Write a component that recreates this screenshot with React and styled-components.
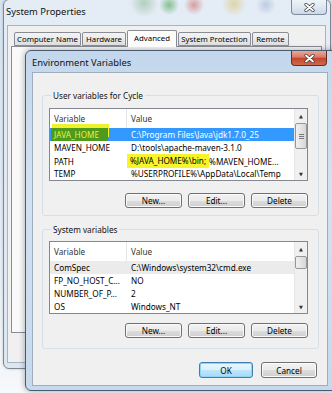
import React from 'react';
import styled, { createGlobalStyle } from 'styled-components';

const GlobalStyle = createGlobalStyle`
    html, body {
        margin: 0;
        padding: 0;
        width: 332px;
        height: 393px;
        overflow: hidden;
        background: #f4f7fa;
    }
    * {
        box-sizing: border-box;
    }
`;

const UI_FONT = `"Noto Sans", "DejaVu Sans", sans-serif`;

const Desktop = styled.div`
    position: relative;
    width: 332px;
    height: 393px;
    overflow: hidden;
    font-family: ${UI_FONT};
    font-size: 8.2px;
    color: #000;
    background: linear-gradient(180deg, #d6e4f1 0%, #e6eef6 70%, #f7f9fb 100%);
`;

const Window = styled.div`
    position: absolute;
    left: ${(p) => p.left}px;
    top: ${(p) => p.top}px;
    width: ${(p) => p.width}px;
    height: ${(p) => p.height}px;
    display: flex;
    flex-direction: column;
    border: 1px solid ${(p) => (p.active ? '#4a5a70' : '#7d8794')};
    border-radius: 6px;
    box-shadow: ${(p) => (p.active ? '0 0 6px rgba(0, 0, 0, 0.35)' : '0 0 3px rgba(0, 0, 0, 0.2)')};
    background: ${(p) =>
        p.active
            ? 'linear-gradient(180deg, #c3d7ec 0%, #d3e2f2 40%, #c6d9ed 100%)'
            : `radial-gradient(circle at 140px 3px, rgba(120, 170, 120, 0.45), transparent 14px),
               radial-gradient(circle at 165px 5px, rgba(70, 160, 80, 0.6), transparent 10px),
               radial-gradient(circle at 190px 5px, rgba(200, 80, 70, 0.5), transparent 10px),
               radial-gradient(circle at 230px 4px, rgba(220, 190, 90, 0.5), transparent 12px),
               radial-gradient(circle at 262px 5px, rgba(150, 170, 210, 0.5), transparent 10px),
               linear-gradient(180deg, #e4ecf5 0%, #dde7f2 100%)`};
`;

const TitleBar = styled.div`
    display: flex;
    align-items: flex-start;
    height: ${(p) => p.height}px;
    flex: none;
`;

const Title = styled.span`
    padding: ${(p) => p.pad};
    font-size: 9.4px;
    color: #111;
    white-space: nowrap;
`;

const CloseButton = styled.div`
    margin-left: auto;
    margin-right: ${(p) => p.right}px;
    width: 36px;
    height: 15px;
    display: flex;
    align-items: center;
    justify-content: center;
    border: 1px solid ${(p) => (p.red ? '#6b2a22' : '#7f8b9c')};
    border-top: none;
    border-radius: 0 0 4px 4px;
    background: ${(p) =>
        p.red
            ? 'linear-gradient(180deg, #e9a898 0%, #d67a66 45%, #c2442c 50%, #cf6a4c 100%)'
            : 'linear-gradient(180deg, #eef3f8 0%, #dfe8f1 50%, #cbd8e6 100%)'};
`;

const CloseGlyph = () => (
    <svg width="11" height="9" viewBox="0 0 11 9">
        <path d="M2 1.5 L9 7.5 M9 1.5 L2 7.5" stroke="#3a3a3a" strokeWidth="3.2" strokeLinecap="round" />
        <path d="M2 1.5 L9 7.5 M9 1.5 L2 7.5" stroke="#fff" strokeWidth="1.8" strokeLinecap="round" />
    </svg>
);

const OuterClient = styled.div`
    flex: 1;
    display: flex;
    flex-direction: column;
    margin: 0 4px 5px 3px;
    padding: 4px 3px 29px 3px;
    background: #f0f0f0;
    border: 1px solid #a9b4c2;
`;

const TabStrip = styled.div`
    display: flex;
    align-items: flex-end;
    height: 16px;
    padding-left: 3px;
    position: relative;
    z-index: 1;
`;

const Tab = styled.div`
    width: ${(p) => p.width}px;
    height: ${(p) => (p.selected ? 17 : 14)}px;
    margin-bottom: ${(p) => (p.selected ? -1 : 0)}px;
    margin-right: 1px;
    display: flex;
    align-items: center;
    justify-content: center;
    white-space: nowrap;
    font-size: 7.8px;
    border: 1px solid #898c95;
    border-bottom: ${(p) => (p.selected ? 'none' : '1px solid #898c95')};
    border-radius: 2px 2px 0 0;
    padding-bottom: ${(p) => (p.selected ? 2 : 0)}px;
    background: ${(p) => (p.selected ? '#fcfcfc' : 'linear-gradient(180deg, #f3f3f3 0%, #ebebeb 50%, #dddddd 100%)')};
`;

const TabPanel = styled.div`
    flex: 1;
    border: 1px solid #898c95;
    background: #f9f9f9;
`;

const DialogClient = styled.div`
    flex: 1;
    display: flex;
    flex-direction: column;
    margin: 0 8px 6px 6px;
    padding: 0 8px 7px 9px;
    background: #f0f0f0;
    border: 1px solid #a0adbd;
`;

const Group = styled.fieldset`
    margin: ${(p) => p.top}px 0 0 0;
    padding: ${(p) => p.padTop}px 10px ${(p) => p.padBottom}px 6px;
    border: 1px solid #d5dfe5;
    border-radius: 3px;
    min-width: 0;
`;

const Legend = styled.legend`
    margin-left: 2px;
    padding: 0 2px;
    line-height: 11px;
    color: #111;
`;

const ListBox = styled.div`
    display: flex;
    height: 73px;
    border: 1px solid #828790;
    background: #fff;
`;

const Table = styled.div`
    flex: 1;
    display: flex;
    flex-direction: column;
    min-width: 0;
`;

const Row = styled.div`
    display: grid;
    grid-template-columns: 77px 1fr;
    height: ${(p) => (p.header ? 19 : 13)}px;
    align-items: center;
    white-space: nowrap;
    background: ${(p) => (p.selected ? '#3399ff' : p.focus ? '#ebebeb' : 'transparent')};
    color: ${(p) => (p.header ? '#333' : '#000')};
`;

const Cell = styled.div`
    height: 100%;
    display: flex;
    align-items: center;
    padding-left: 4px;
    border-right: ${(p) => (p.divider ? '1px solid #e3e6ea' : 'none')};
    color: ${(p) => (p.light ? '#fff' : 'inherit')};
`;

const GreenMark = styled.span`
    margin-left: -3px;
    padding: 0 9px 0 3px;
    height: 13px;
    display: flex;
    align-items: center;
    background: #4d9a1c;
    color: #e6f04a;
    box-shadow: 1px -4px 0 #eef22c;
`;

const YellowMark = styled.span`
    margin-left: -4px;
    padding: 1px 3px 2px 3px;
    background: #f6f52c;
`;

const Scrollbar = styled.div`
    width: 13px;
    flex: none;
    display: flex;
    flex-direction: column;
    background: #f0f0f0;
    border-left: 1px solid #e6e6e6;
`;

const Arrow = styled.div`
    height: 13px;
    display: flex;
    align-items: center;
    justify-content: center;
    font-size: 5px;
    color: #333;
`;

const Thumb = styled.div`
    height: ${(p) => p.size}px;
    margin-top: 1px;
    border: 1px solid #979797;
    border-radius: 2px;
    background: linear-gradient(90deg, #f1f1f1 0%, #e4e4e4 50%, #d6d6d6 100%);
    display: flex;
    align-items: center;
    justify-content: center;
`;

const Grip = styled.div`
    width: 5px;
    height: 5px;
    background: repeating-linear-gradient(180deg, #777 0 1px, transparent 1px 2px);
`;

const Track = styled.div`
    flex: 1;
`;

const ButtonRow = styled.div`
    display: flex;
    justify-content: flex-end;
    gap: ${(p) => p.gap}px;
    margin-top: ${(p) => p.top}px;
    margin-right: ${(p) => p.right || 0}px;
`;

const Button = styled.button`
    width: ${(p) => p.width}px;
    height: ${(p) => p.height}px;
    padding: 0;
    font-family: ${UI_FONT};
    font-size: 8.2px;
    color: #000;
    border: 1px solid ${(p) => (p.primary ? '#3c7fb1' : '#707070')};
    border-radius: 3px;
    box-shadow: inset 0 0 0 1px ${(p) => (p.primary ? '#8fd3f5' : '#fbfbfb')};
    background: ${(p) =>
        p.primary
            ? 'linear-gradient(180deg, #eaf6fd 0%, #d9f0fc 50%, #bee6fd 50%, #a7d9f5 100%)'
            : 'linear-gradient(180deg, #f2f2f2 0%, #ebebeb 50%, #dddddd 50%, #cfcfcf 100%)'};
`;

const userVars = [
    { name: 'JAVA_HOME', value: 'C:\\Program Files\\Java\\jdk1.7.0_25', selected: true },
    { name: 'MAVEN_HOME', value: 'D:\\tools\\apache-maven-3.1.0' },
    { name: 'PATH', value: '%MAVEN_HOME...', marked: '%JAVA_HOME%\\bin;' },
    { name: 'TEMP', value: '%USERPROFILE%\\AppData\\Local\\Temp' },
];

const systemVars = [
    { name: 'ComSpec', value: 'C:\\Windows\\system32\\cmd.exe', focus: true },
    { name: 'FP_NO_HOST_C...', value: 'NO' },
    { name: 'NUMBER_OF_P...', value: '2' },
    { name: 'OS', value: 'Windows_NT' },
];

const VariableList = ({ rows, thumb, grip }) => (
    <ListBox>
        <Table>
            <Row header>
                <Cell divider>Variable</Cell>
                <Cell>Value</Cell>
            </Row>
            {rows.map((r) => (
                <Row key={r.name} selected={r.selected} focus={r.focus}>
                    <Cell>{r.selected ? <GreenMark>{r.name}</GreenMark> : r.name}</Cell>
                    <Cell light={r.selected}>
                        {r.marked && <YellowMark>{r.marked}</YellowMark>}
                        {r.value}
                    </Cell>
                </Row>
            ))}
        </Table>
        <Scrollbar>
            <Arrow>▲</Arrow>
            <Thumb size={thumb}>{grip && <Grip />}</Thumb>
            <Track />
            <Arrow>▼</Arrow>
        </Scrollbar>
    </ListBox>
);

const EditButtons = ({ top }) => (
    <ButtonRow gap={6} top={top}>
        <Button width={57} height={15}>New...</Button>
        <Button width={57} height={15}>Edit...</Button>
        <Button width={57} height={15}>Delete</Button>
    </ButtonRow>
);

const tabs = [
    { label: 'Computer Name', width: 67 },
    { label: 'Hardware', width: 44 },
    { label: 'Advanced', width: 50, selected: true },
    { label: 'System Protection', width: 73 },
    { label: 'Remote', width: 37 },
];

const App = () => (
    <Desktop>
        <GlobalStyle />
        <Window left={3} top={-1} width={328} height={370}>
            <TitleBar height={25}>
                <Title pad="5px 0 0 2px">System Properties</Title>
                <CloseButton right={3}>
                    <CloseGlyph />
                </CloseButton>
            </TitleBar>
            <OuterClient>
                <TabStrip>
                    {tabs.map((t) => (
                        <Tab key={t.label} width={t.width} selected={t.selected}>
                            {t.label}
                        </Tab>
                    ))}
                </TabStrip>
                <TabPanel />
            </OuterClient>
        </Window>

        <Window active left={25} top={50} width={312} height={341}>
            <TitleBar height={21}>
                <Title pad="5px 0 0 6px">Environment Variables</Title>
                <CloseButton red right={9}>
                    <CloseGlyph />
                </CloseButton>
            </TitleBar>
            <DialogClient>
                <Group top={17} padTop={7} padBottom={7}>
                    <Legend>User variables for Cycle</Legend>
                    <VariableList rows={userVars} thumb={26} grip />
                    <EditButtons top={12} />
                </Group>
                <Group top={8} padTop={6} padBottom={10}>
                    <Legend>System variables</Legend>
                    <VariableList rows={systemVars} thumb={13} />
                    <EditButtons top={9} />
                </Group>
                <ButtonRow gap={8} top={13} right={2}>
                    <Button primary width={54} height={16}>OK</Button>
                    <Button width={56} height={16}>Cancel</Button>
                </ButtonRow>
            </DialogClient>
        </Window>
    </Desktop>
);

App.displayName = 'App';
export default App;
